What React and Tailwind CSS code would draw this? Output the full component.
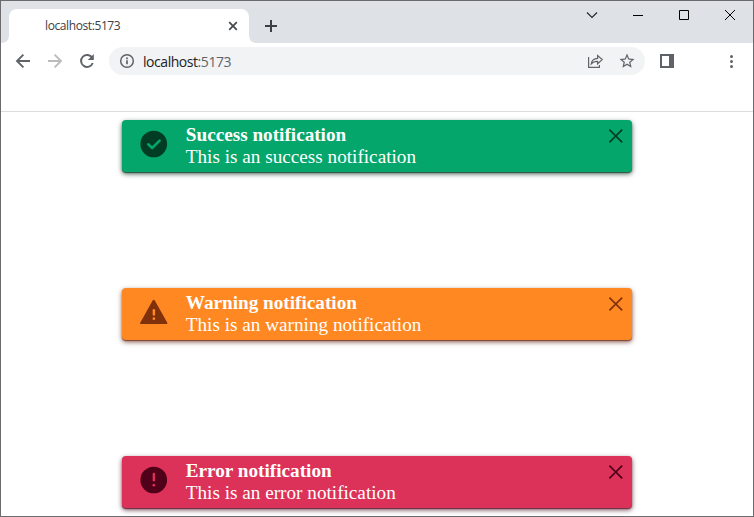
import React from "react";

const NOTIFICATIONS = [
  {
    kind: "success",
    title: "Success notification",
    text: "This is an success notification",
    card: "bg-[#05a66b] text-[#003d24] shadow-[0_1px_1px_rgba(0,50,30,0.65),0_2px_5px_rgba(0,40,24,0.7)]",
  },
  {
    kind: "warning",
    title: "Warning notification",
    text: "This is an warning notification",
    card: "bg-[#ff8822] text-[#80300b] shadow-[0_1px_1px_rgba(100,30,10,0.65),0_2px_5px_rgba(90,25,10,0.7)]",
  },
  {
    kind: "error",
    title: "Error notification",
    text: "This is an error notification",
    card: "bg-[#dc3158] text-[#500018] shadow-[0_1px_1px_rgba(75,0,24,0.65),0_2px_5px_rgba(70,0,24,0.7)]",
  },
];

function StatusIcon({ kind }) {
  if (kind === "warning") {
    return (
      <svg className="mt-2 ml-4 size-8 shrink-0 text-[#ff8822]" viewBox="0 0 24 24" fill="currentColor">
        <path className="fill-[#80300b]" d="M2.200 21h19.200c.500 0 .800-.550.550-1L12.600 3.400a.950.950 0 0 0-1.600 0L1.650 20c-.250.450.050 1 .550 1z" />
        <rect x="11" y="9.800" width="1.800" height="5" rx=".9" />
        <circle cx="11.900" cy="17" r="1" />
      </svg>
    );
  }
  if (kind === "error") {
    return (
      <svg className="mt-2 ml-4 size-8 shrink-0 text-[#dc3158]" viewBox="0 0 24 24" fill="currentColor">
        <circle className="fill-[#500018]" cx="11.800" cy="12" r="10" />
        <rect x="11" y="6.600" width="1.800" height="6.400" rx=".9" />
        <circle cx="11.900" cy="15.900" r="1" />
      </svg>
    );
  }
  return (
    <svg className="mt-2 ml-4 size-8 shrink-0 text-[#05a66b]" viewBox="0 0 24 24" fill="none">
      <circle className="fill-[#003d24]" cx="11.800" cy="12" r="10" />
      <path d="M7.700 12.200l2.900 2.800 5.600-5.500" stroke="currentColor" strokeWidth="1.900" strokeLinecap="round" strokeLinejoin="round" />
    </svg>
  );
}

function Notification({ item }) {
  return (
    <section className={`flex h-[52px] w-[510px] items-start rounded-[4px] ${item.card}`}>
      <StatusIcon kind={item.kind} />
      <div className="ml-4 grow pt-1 font-['Liberation_Serif',serif] text-[19.2px] leading-[22px] text-white">
        <h2 className="font-bold">{item.title}</h2>
        <p>{item.text}</p>
      </div>
      <svg className="mt-1 mr-1 size-6 shrink-0" viewBox="0 0 24 24" fill="none" stroke="currentColor" strokeWidth="1.650">
        <path d="M5.400 5.600l12.800 12.800M18.200 5.600L5.400 18.400" />
      </svg>
    </section>
  );
}

function TabStrip() {
  return (
    <div className="flex h-[42px] shrink-0 bg-[#dee1e6]">
      <div className="flex w-2 items-end">
        <svg className="size-2" viewBox="0 0 8 8"><path d="M0 8Q8 8 8 0V8z" fill="#fff" /></svg>
      </div>
      <div className="mt-2 flex h-[34px] w-[240px] items-center rounded-t-lg bg-white pr-[10px] pl-9">
        <span className="grow font-['Open_Sans',sans-serif] text-[12px] tracking-[-0.4px] text-[#3c4043]">localhost:5173</span>
        <svg className="size-3" viewBox="0 0 12 12" stroke="#45494d" strokeWidth="1.700">
          <path d="M2.200 2.200l7.600 7.600M9.800 2.200l-7.600 7.600" />
        </svg>
      </div>
      <div className="flex w-2 items-end">
        <svg className="size-2" viewBox="0 0 8 8"><path d="M8 8Q0 8 0 0V8z" fill="#fff" /></svg>
      </div>
      <svg className="mt-[19px] ml-2 size-3" viewBox="0 0 12 12" stroke="#3c4043" strokeWidth="2">
        <path d="M6 0v12M0 6h12" />
      </svg>
      <div className="ml-auto flex h-7 w-[184px]">
        <svg className="h-7 w-[46px]" viewBox="0 0 46 28" fill="none" stroke="#222" strokeWidth="1.100"><path d="M18 11.500l5 5 5-5" /></svg>
        <svg className="h-7 w-[46px]" viewBox="0 0 46 28" fill="#000"><path d="M18 14h10v1h-10z" /></svg>
        <svg className="h-7 w-[46px]" viewBox="0 0 46 28" fill="none" stroke="#000"><path d="M18.500 9.500h9v9h-9z" /></svg>
        <svg className="h-7 w-[46px]" viewBox="0 0 46 28" fill="none" stroke="#000"><path d="M18 9l10 10M28 9l-10 10" /></svg>
      </div>
    </div>
  );
}

function Toolbar() {
  return (
    <div className="flex h-[69px] shrink-0 items-start border-b border-[#dadce0] bg-white pt-1 text-[#5f6368]">
      <svg className="mt-1 ml-3 size-5" viewBox="0 0 20 20" fill="none" stroke="currentColor" strokeWidth="1.900">
        <path d="M17 10H4.500M10.400 3.600L4 10l6.400 6.400" />
      </svg>
      <svg className="mt-1 ml-3 size-5 text-[#babcbe]" viewBox="0 0 20 20" fill="none" stroke="currentColor" strokeWidth="1.900">
        <path d="M3 10h12.500M9.600 3.600L16 10l-6.400 6.400" />
      </svg>
      <svg className="mt-1 ml-3 size-5" viewBox="0 0 20 20" fill="none" stroke="currentColor" strokeWidth="2">
        <path d="M15.200 6.800A6 6 0 1 0 15.700 12" />
        <path d="M16.800 3v6H10.800z" fill="currentColor" stroke="none" />
      </svg>
      <div className="ml-3 flex h-7 w-[536px] items-center rounded-full bg-[#f1f3f4] pr-[9px] pl-[10px]">
        <svg className="size-4" viewBox="0 0 16 16" fill="none" stroke="currentColor" strokeWidth="1.500">
          <circle cx="8" cy="8" r="6.300" />
          <path d="M8 7.200v4M8 4.600v1.600" strokeWidth="1.700" />
        </svg>
        <p className="ml-2 grow font-['Open_Sans',sans-serif] text-[14px] tracking-[-0.45px]">
          <span className="text-[#202124]">localhost</span>:5173
        </p>
        <svg className="size-[18px]" viewBox="0 0 18 18" fill="none" stroke="currentColor" strokeWidth="1.200">
          <path d="M1.600 5v10.400h10.800v-2.500M4.300 11.800c.4-3.500 2.600-5.200 6.300-5.400V3.500l4.600 4.100-4.600 4.200V9.300C7.600 9.200 5.700 10 4.300 11.800z" />
        </svg>
        <svg className="ml-[13px] size-[18px]" viewBox="0 0 24 24" fill="currentColor">
          <path d="M22 9.240l-7.190-.620L12 2 9.190 8.630 2 9.240l5.460 4.730L5.820 21 12 17.270 18.180 21l-1.630-7.030L22 9.240zM12 15.400l-3.760 2.270 1-4.280-3.320-2.880 4.380-.380L12 6.100l1.710 4.040 4.380.380-3.320 2.880 1 4.280L12 15.400z" />
        </svg>
      </div>
      <svg className="mt-[7px] ml-[15px] h-[14px] w-[14px]" viewBox="0 0 14 14" fill="currentColor" fillRule="evenodd">
        <path d="M0 0h14v14H0zM2 2v10h7V2z" />
      </svg>
      <svg className="mt-[6px] mr-[13px] ml-auto size-4" viewBox="0 0 16 16" fill="currentColor">
        <circle cx="7.500" cy="3.500" r="1.500" /><circle cx="7.500" cy="8.500" r="1.500" /><circle cx="7.500" cy="13.500" r="1.500" />
      </svg>
    </div>
  );
}

export default function App() {
  return (
    <div className="flex h-[517px] w-[754px] flex-col overflow-hidden border border-[#6b6b6d] bg-white">
      <TabStrip />
      <Toolbar />
      <main className="flex flex-col gap-[116px] pt-2 pl-[120.8px]">
        {NOTIFICATIONS.map((item) => (
          <Notification key={item.kind} item={item} />
        ))}
      </main>
    </div>
  );
}
